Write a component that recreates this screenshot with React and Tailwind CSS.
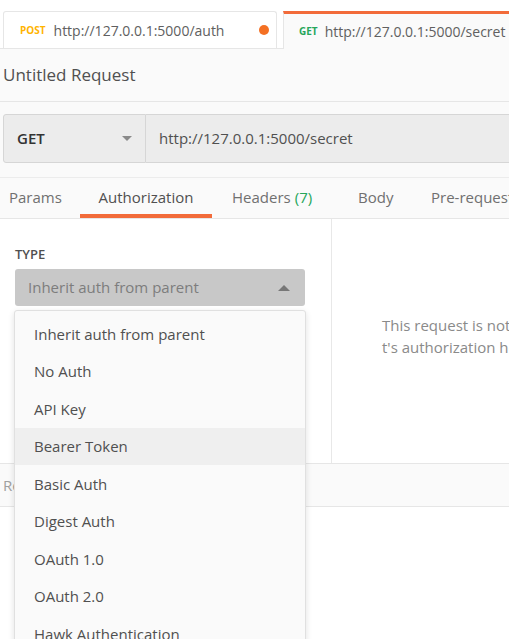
const authTypes = [
  "Inherit auth from parent",
  "No Auth",
  "API Key",
  "Bearer Token",
  "Basic Auth",
  "Digest Auth",
  "OAuth 1.0",
  "OAuth 2.0",
  "Hawk Authentication",
  "AWS Signature",
];

const App = () => {
  const hovered = "Bearer Token";

  return (
    <div
      className="w-[509px] h-[639px] overflow-hidden bg-white flex flex-col"
      style={{ fontFamily: '"Open Sans", "Liberation Sans", sans-serif' }}
    >
      {/* Request tabs */}
      <div className="h-[49px] shrink-0 flex items-end pl-[3px] gap-[6px] border-b border-[#e6e6e6] bg-white">
        <div className="w-[274px] h-[37px] shrink-0 flex items-center pl-[16px] pr-[7px] border border-b-0 border-[#e6e6e6] rounded-t-[3px] bg-white">
          <span className="text-[10px] font-bold text-[#ffb400] mr-[8px]">POST</span>
          <span className="text-[14px] text-[#606060] whitespace-nowrap">http://127.0.0.1:5000/auth</span>
          <span className="ml-auto w-[10px] h-[10px] rounded-full bg-[#f47023]" />
        </div>
        <div className="w-[240px] h-[38px] -mb-px shrink-0 flex items-center pl-[15px] border-l border-[#e6e6e6] border-t-[3px] border-t-[#f26b3a] bg-[#fafafa]">
          <span className="text-[10px] font-bold text-[#26a65b] mr-[7px]">GET</span>
          <span className="text-[14px] text-[#606060] whitespace-nowrap">http://127.0.0.1:5000/secret</span>
        </div>
      </div>

      {/* Title */}
      <div className="h-[53px] shrink-0 flex items-center pl-[3px] bg-[#fafafa] border-b border-[#e6e6e6]">
        <span className="text-[17px] text-[#505050]">Untitled Request</span>
      </div>

      {/* URL bar */}
      <div className="shrink-0 bg-[#fafafa] pt-[12px] pb-[14px] pl-[3px] border-b border-[#ececec]">
        <div className="flex h-[49px]">
          <div className="w-[143px] shrink-0 flex items-center pl-[13px] pr-[13px] bg-[#ececec] border border-[#d6d6d6] rounded-l-[3px]">
            <span className="text-[15px] font-semibold text-[#333]">GET</span>
            <svg className="ml-auto" width="10" height="6" viewBox="0 0 10 6">
              <path d="M0 0 L10 0 L5 5 Z" fill="#8a8a8a" />
            </svg>
          </div>
          <div className="flex-1 flex items-center pl-[13px] bg-[#ececec] border-y border-[#d6d6d6]">
            <span className="text-[15px] text-[#505050] whitespace-nowrap">http://127.0.0.1:5000/secret</span>
          </div>
        </div>
      </div>

      {/* Request section tabs */}
      <div className="h-[41px] shrink-0 flex bg-[#fafafa] border-b border-[#e6e6e6] text-[15px] text-[#707070] whitespace-nowrap">
        <div className="w-[80px] shrink-0 flex items-center pl-[9px] pb-[2px]">Params</div>
        <div className="w-[132px] shrink-0 flex items-center justify-center text-[#505050] border-b-[4px] border-[#f26b3a] pt-[2px]">
          Authorization
        </div>
        <div className="w-[126px] shrink-0 flex items-center pl-[20px] pb-[2px]">
          Headers <span className="ml-[4px] text-[#26a65b]">(7)</span>
        </div>
        <div className="w-[73px] shrink-0 flex items-center pl-[20px] pb-[2px]">Body</div>
        <div className="shrink-0 flex items-center pl-[20px] pb-[2px]">Pre-request Script</div>
      </div>

      {/* Auth content */}
      <div className="h-[244px] shrink-0 flex bg-white">
        <div className="w-[332px] shrink-0 border-r border-[#e8e8e8] pl-[15px] pt-[27px]">
          <div className="text-[13px] leading-[17px] font-semibold text-[#505050] mb-[6px]">TYPE</div>
          <div className="relative w-[290px]">
            <div className="h-[37px] flex items-center pl-[13px] pr-[15px] bg-[#c8c8c8] rounded-[3px]">
              <span className="text-[15px] text-[#7d7d7d]">Inherit auth from parent</span>
              <svg className="ml-auto" width="12" height="6" viewBox="0 0 12 6">
                <path d="M0 6 L12 6 L6 0 Z" fill="#777" />
              </svg>
            </div>
            <div className="absolute z-10 top-[41px] left-[-1px] w-[292px] bg-[#fafafa] border border-[#e0e0e0] rounded-[3px] shadow-[0_2px_6px_rgba(0,0,0,0.12)] pt-[4px]">
              {authTypes.map((type) => (
                <div
                  key={type}
                  className={`h-[37.5px] flex items-center pl-[19px] text-[15px] text-[#505050] ${
                    type === hovered ? "bg-[#efefef]" : ""
                  }`}
                >
                  {type}
                </div>
              ))}
            </div>
          </div>
        </div>
        <div className="flex-1 pl-[50px] pt-[95px] text-[15px] leading-[22px] text-[#8a8a8a] whitespace-nowrap">
          <div>This request is not inheriting any authorization helper</div>
          <div>t's authorization helper.</div>
        </div>
      </div>

      {/* Response */}
      <div className="h-[44px] shrink-0 flex items-center pl-[3px] bg-[#fafafa] border-y border-[#e6e6e6]">
        <span className="text-[15px] text-[#a0a0a0]">Response</span>
      </div>
      <div className="flex-1 bg-white" />
    </div>
  );
};

export default App;
